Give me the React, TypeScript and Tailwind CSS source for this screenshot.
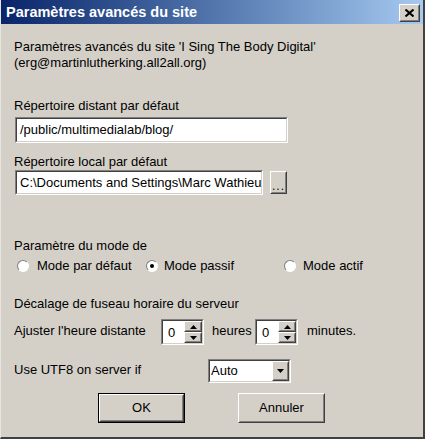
import { JSX } from 'react'

const font = { fontFamily: '"Liberation Sans", Arial, sans-serif' }

function Sunken({ className, children }: { className: string; children?: React.ReactNode }): JSX.Element {
  return (
    <div className={`border border-t-[#808080] border-l-[#808080] border-b-white border-r-white ${className}`}>
      <div className="h-full w-full border border-t-[#404040] border-l-[#404040] border-b-[#d4d0c8] border-r-[#d4d0c8] bg-white flex items-center">
        {children}
      </div>
    </div>
  )
}

function Raised({ className, children }: { className: string; children?: React.ReactNode }): JSX.Element {
  return (
    <div className={`border border-t-[#ffffff] border-l-[#ffffff] border-b-[#404040] border-r-[#404040] bg-[#d4d0c8] ${className}`}>
      <div className="h-full w-full border border-t-[#d4d0c8] border-l-[#d4d0c8] border-b-[#808080] border-r-[#808080] flex items-center justify-center">
        {children}
      </div>
    </div>
  )
}

function Radio({ checked }: { checked?: boolean }): JSX.Element {
  return (
    <div className="w-[12px] h-[12px] rounded-full border border-t-[#808080] border-l-[#808080] border-b-white border-r-white bg-white flex items-center justify-center">
      {checked && <div className="w-[4px] h-[4px] rounded-full bg-black" />}
    </div>
  )
}

function Arrow({ up }: { up?: boolean }): JSX.Element {
  return (
    <svg width="7" height="4" viewBox="0 0 7 4">
      {up ? <polygon points="3.5,0 7,4 0,4" fill="#000" /> : <polygon points="0,0 7,0 3.5,4" fill="#000" />}
    </svg>
  )
}

function Spinner(): JSX.Element {
  return (
    <Sunken className="w-[43px] h-[26px]">
      <span className="flex-1 pl-[5px] text-[13px] leading-none text-black">0</span>
      <div className="flex flex-col h-full w-[18px]">
        <Raised className="flex-1">
          <Arrow up />
        </Raised>
        <Raised className="flex-1">
          <Arrow />
        </Raised>
      </div>
    </Sunken>
  )
}

export default function App(): JSX.Element {
  return (
    <div
      style={font}
      className="w-[425px] h-[439px] bg-[#d4d0c8] text-black text-[13px] leading-[16px] flex flex-col border-l border-l-[#e8e6e0] border-r-2 border-r-[#404040] border-b-2 border-b-[#404040] overflow-hidden"
    >
      <div className="h-[24px] shrink-0 bg-gradient-to-r from-[#0a246a] to-[#a6caf0] flex items-center justify-between pl-[5px] pr-[3px]">
        <span className="text-white font-bold text-[14.5px]">Paramètres avancés du site</span>
        <Raised className="w-[21px] h-[18px] mt-[1px]">
          <svg width="9" height="8" viewBox="0 0 9 8">
            <path d="M0.5 0.5 L8.5 7.5 M8.5 0.5 L0.5 7.5" stroke="#000" strokeWidth="2" />
          </svg>
        </Raised>
      </div>

      <div className="flex flex-col pl-[13px] pt-[15px]">
        <p>Paramètres avancés du site 'I Sing The Body Digital'</p>
        <p>(erg@martinlutherking.all2all.org)</p>

        <p className="mt-[27px]">Répertoire distant par défaut</p>
        <Sunken className="w-[273px] h-[26px] ml-[1px] mt-[3px]">
          <span className="pl-[3px]">/public/multimedialab/blog/</span>
        </Sunken>

        <p className="mt-[11px]">Répertoire local par défaut</p>
        <div className="flex items-center ml-[1px] gap-[7px]">
          <Sunken className="w-[248px] h-[25px] overflow-hidden">
            <span className="pl-[3px] whitespace-nowrap">C:\Documents and Settings\Marc Wathieu</span>
          </Sunken>
          <Raised className="w-[17px] h-[23px]">
            <span className="text-[12px] leading-none mt-[6px] tracking-[1px]">...</span>
          </Raised>
        </div>

        <p className="mt-[43px]">Paramètre du mode de</p>
        <div className="flex items-center mt-[4px] pl-[3px]">
          <div className="w-[129px] flex items-center gap-[8px]">
            <Radio />
            <span>Mode par défaut</span>
          </div>
          <div className="w-[138px] flex items-center gap-[6px]">
            <Radio checked />
            <span>Mode passif</span>
          </div>
          <div className="flex items-center gap-[7px]">
            <Radio />
            <span>Mode actif</span>
          </div>
        </div>

        <p className="mt-[22px]">Décalage de fuseau horaire du serveur</p>
        <div className="flex items-center mt-[7px]">
          <span className="w-[147px] -mt-[3px]">Ajuster l'heure distante</span>
          <Spinner />
          <span className="w-[51px] pl-[8px] -mt-[3px]">heures</span>
          <Spinner />
          <span className="pl-[9px] -mt-[3px]">minutes.</span>
        </div>

        <div className="flex items-center mt-[14px]">
          <span className="w-[194px] -mt-[2px]">Use UTF8 on server if</span>
          <Sunken className="w-[83px] h-[24px]">
            <span className="flex-1 pl-[1px]">Auto</span>
            <Raised className="w-[17px] h-full">
              <Arrow />
            </Raised>
          </Sunken>
        </div>
      </div>

      <div className="flex justify-center gap-[53px] mt-[10px] pr-[1px]">
        <div className="w-[87px] h-[30px] border border-black">
          <Raised className="w-full h-full">
            <span>OK</span>
          </Raised>
        </div>
        <Raised className="w-[87px] h-[30px]">
          <span>Annuler</span>
        </Raised>
      </div>
    </div>
  )
}
